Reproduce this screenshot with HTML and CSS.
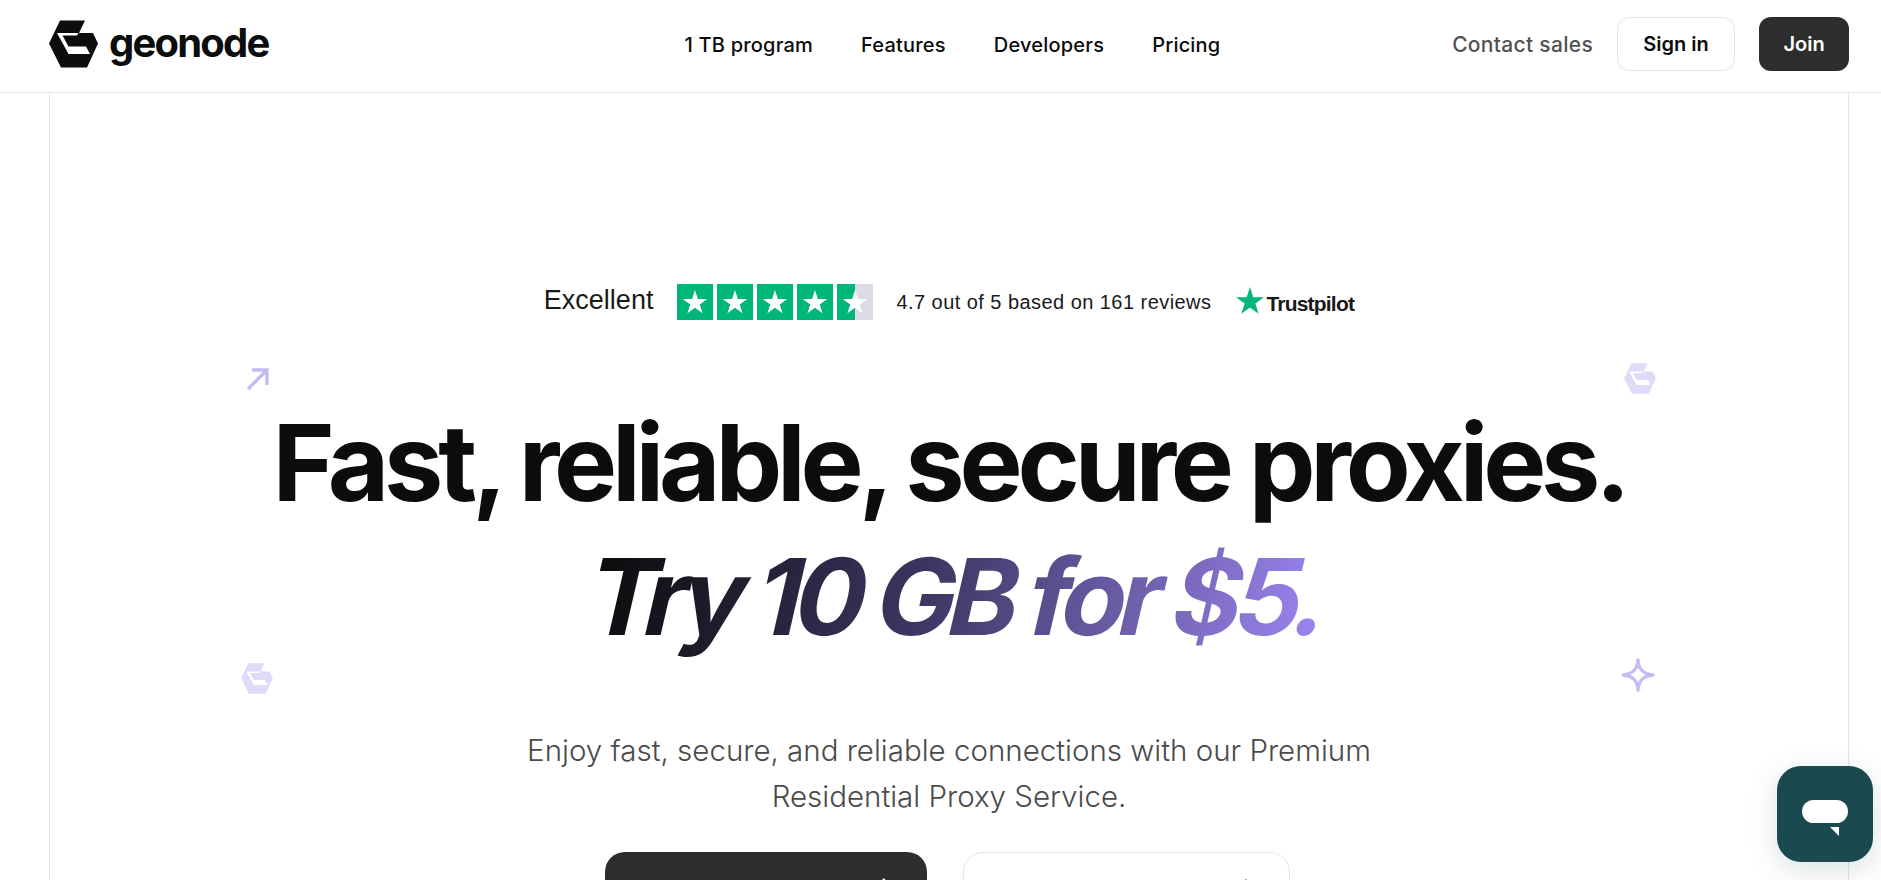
FILE: index.html
```html
<!DOCTYPE html>
<html lang="en">
<head>
<meta charset="utf-8">
<title>Geonode</title>
<link rel="stylesheet" href="styles.css">
</head>
<body>
<header class="topbar">
  <a class="brand" href="#">
    <svg class="brand-mark" viewBox="0 0 49 48"><path d="M0 23.5L11 .5H36L30 13H44L49 23.5L38 47.5H12Z" fill="#0b0c0c"/><path d="M8 13H29.5L28 15.5H13.5L19.5 26.5H37L41 34H19.5Z" fill="#fff"/></svg>
    <span class="brand-name">geonode</span>
  </a>
  <nav class="nav">
    <a href="#">1 TB program</a>
    <a href="#">Features</a>
    <a href="#">Developers</a>
    <a href="#">Pricing</a>
  </nav>
  <div class="actions">
    <a class="contact" href="#">Contact sales</a>
    <a class="btn btn-light" href="#">Sign in</a>
    <a class="btn btn-dark" href="#">Join</a>
  </div>
</header>
<main class="frame">
  <div class="rating">
    <span class="excellent">Excellent</span>
    <span class="stars">
      <span class="star"><svg viewBox="0 0 36 36"><path d="M18 6l2.9 8.9h9.4l-7.6 5.5 2.9 8.9-7.6-5.5-7.6 5.5 2.9-8.9-7.6-5.5h9.4z" fill="#fff"/></svg></span>
      <span class="star"><svg viewBox="0 0 36 36"><path d="M18 6l2.9 8.9h9.4l-7.6 5.5 2.9 8.9-7.6-5.5-7.6 5.5 2.9-8.9-7.6-5.5h9.4z" fill="#fff"/></svg></span>
      <span class="star"><svg viewBox="0 0 36 36"><path d="M18 6l2.9 8.9h9.4l-7.6 5.5 2.9 8.9-7.6-5.5-7.6 5.5 2.9-8.9-7.6-5.5h9.4z" fill="#fff"/></svg></span>
      <span class="star"><svg viewBox="0 0 36 36"><path d="M18 6l2.9 8.9h9.4l-7.6 5.5 2.9 8.9-7.6-5.5-7.6 5.5 2.9-8.9-7.6-5.5h9.4z" fill="#fff"/></svg></span>
      <span class="star star-part"><svg viewBox="0 0 36 36"><path d="M18 6l2.9 8.9h9.4l-7.6 5.5 2.9 8.9-7.6-5.5-7.6 5.5 2.9-8.9-7.6-5.5h9.4z" fill="#fff"/></svg></span>
    </span>
    <span class="score">4.7 out of 5 based on 161 reviews</span>
    <span class="tp">
      <svg class="tp-star" viewBox="0 0 28 27"><path d="M14 0l3.3 10.2H28l-8.7 6.3 3.3 10.3L14 20.5l-8.7 6.3 3.4-10.3L0 10.2h10.7z" fill="#00b67a"/></svg>
      <span class="tp-name">Trustpilot</span>
    </span>
  </div>
  <div class="hero">
    <svg class="deco deco-arrow" viewBox="0 0 24 24"><path d="M2 22L21 3M6 3h15v15" fill="none" stroke="#c6bcf4" stroke-width="3.4"/></svg>
    <svg class="deco deco-logo-r" viewBox="0 0 49 48"><path d="M0 23.5L11 .5H36L30 13H44L49 23.5L38 47.5H12Z" fill="#dfdaf9"/><path d="M8 13H29.5L28 15.5H13.5L19.5 26.5H37L41 34H19.5Z" fill="#fff"/></svg>
    <svg class="deco deco-logo-l" viewBox="0 0 49 48"><path d="M0 23.5L11 .5H36L30 13H44L49 23.5L38 47.5H12Z" fill="#dfdaf9"/><path d="M8 13H29.5L28 15.5H13.5L19.5 26.5H37L41 34H19.5Z" fill="#fff"/></svg>
    <svg class="deco deco-spark" viewBox="0 0 36 36"><path d="M18 3C18.6 12.5 23 17 33 18C23 19 18.6 23.5 18 33C17.4 23.5 13 19 3 18C13 17 17.4 12.5 18 3Z" fill="none" stroke="#c6bcf4" stroke-width="3.4" stroke-linejoin="round"/></svg>
    <h1 class="title">Fast, reliable, secure proxies.<br><span class="accent">Try 10 GB for $5.</span></h1>
    <p class="lead">Enjoy fast, secure, and reliable connections with our Premium<br>Residential Proxy Service.</p>
    <div class="cta">
      <a class="cta-btn cta-dark" href="#" aria-label="Get started"><svg class="cta-arrow" viewBox="0 0 16 16"><path d="M1 8h13M8 2l6 6-6 6" fill="none" stroke="currentColor" stroke-width="2.4"/></svg></a>
      <a class="cta-btn cta-light" href="#" aria-label="Contact sales"><svg class="cta-arrow" viewBox="0 0 16 16"><path d="M1 8h13M8 2l6 6-6 6" fill="none" stroke="currentColor" stroke-width="2.4"/></svg></a>
    </div>
  </div>
</main>
<button class="chat" aria-label="Chat">
  <svg viewBox="0 0 46 36"><rect width="46" height="23" rx="11.5" fill="#fff"/><path d="M28 27h9v9z" fill="#fff"/></svg>
</button>
</body>
</html>
```
FILE: styles.css
```css
* { box-sizing: border-box; }
html, body { margin: 0; height: 880px; overflow: hidden; background: #fff; }
body { font-family: "Inter", "Liberation Sans", sans-serif; color: #0b0c0c; }
a { color: inherit; text-decoration: none; }

.topbar { height: 93px; border-bottom: 1px solid #e5e5e5; display: grid; grid-template-columns: 1fr auto 1fr; align-items: center; padding: 0 32px 4px 49px; }
.brand { display: flex; align-items: center; gap: 11px; }
.brand-mark { width: 49px; height: 48px; }
.brand-name { font-size: 40px; font-weight: 700; letter-spacing: -1.8px; line-height: 48px; margin-top: -3px; }
.nav { display: flex; gap: 48px; font-size: 20px; font-weight: 500; letter-spacing: .2px; margin: 2px 0 0 7px; }
.actions { display: flex; align-items: center; justify-content: flex-end; font-size: 20px; font-weight: 600; }
.contact { color: #525252; font-size: 21px; font-weight: 500; letter-spacing: .3px; margin-right: 24px; }
.btn { height: 54px; display: flex; align-items: center; justify-content: center; border-radius: 12px; }
.btn-light { width: 118px; border: 1px solid #e5e5e5; margin-right: 24px; }
.btn-dark { width: 90px; background: #2d2d2d; color: #fff; }

.frame { margin: 0 32px 0 49px; height: 787px; overflow: hidden; border-left: 1px solid #e5e5e5; border-right: 1px solid #e5e5e5; display: flex; flex-direction: column; align-items: center; padding-top: 191px; }
.rating { display: flex; flex: none; align-items: center; height: 36px; font-family: "Liberation Sans", Arial, sans-serif; color: #191919; }
.excellent { font-size: 27px; margin: -3px 24px 0 0; }
.stars { display: flex; gap: 4px; margin-right: 23px; }
.star { width: 36px; height: 36px; background: #00b67a; display: block; }
.star svg { display: block; width: 36px; height: 36px; }
.star-part { background: linear-gradient(90deg, #00b67a 50%, #dcdce6 50%); }
.score { font-size: 20px; letter-spacing: .45px; margin-right: 25px; }
.tp { display: flex; align-items: flex-start; }
.tp-star { width: 28px; height: 27px; margin-top: -1px; }
.tp-name { font-size: 21px; font-weight: 700; letter-spacing: -.8px; color: #191919; margin: 4px 0 0 2px; }

.hero { position: relative; flex: none; width: 100%; display: flex; flex-direction: column; align-items: center; margin-top: 20px; }
.deco { position: absolute; }
.deco-arrow { left: 196px; top: 27px; width: 24px; height: 24px; }
.deco-logo-r { left: 1574px; top: 23px; width: 32px; height: 31px; }
.deco-logo-l { left: 191px; top: 323px; width: 32px; height: 31px; }
.deco-spark { left: 1570px; top: 317px; width: 36px; height: 36px; }
.title { margin: 0; text-align: center; font-size: 106px; line-height: 134px; font-weight: 650; letter-spacing: -5.2px; padding-top: 56px; }
.accent { display: inline-block; margin-left: 16px; transform: skewX(-13deg); letter-spacing: -7.4px; background: linear-gradient(90deg, #0b0c0c 0%, #3d3560 45%, #9a84ee 100%); -webkit-background-clip: text; background-clip: text; color: transparent; }
.lead { margin: 63px 0 0; text-align: center; font-size: 29.5px; line-height: 46px; font-weight: 300; color: #4a4a4a; }
.cta { display: flex; gap: 36px; margin: 33px 0 0 -3px; }
.cta-btn { height: 80px; border-radius: 20px; display: flex; justify-content: flex-end; padding: 25px 36px 0 0; }
.cta-dark { width: 322px; background: #2d2d2d; color: #fff; }
.cta-light { width: 327px; border: 1px solid #e5e5e5; background: #fff; color: #0b0c0c; }
.cta-arrow { width: 16px; height: 16px; }

.chat { position: fixed; right: 8px; bottom: 18px; width: 96px; height: 96px; border: 0; padding: 0; border-radius: 24px; background: #1a4a4f; box-shadow: 0 8px 30px rgba(30,60,70,.16); display: flex; align-items: center; justify-content: center; }
.chat svg { width: 46px; height: 36px; margin-top: 8px; }
```
